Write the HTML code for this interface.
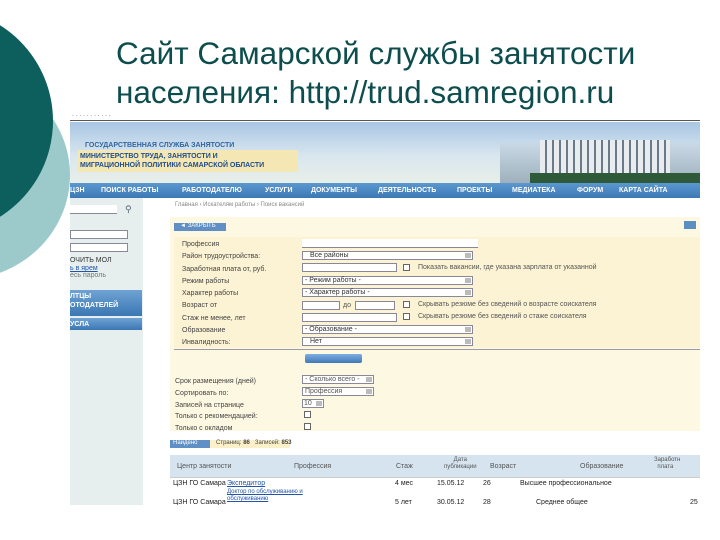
<!DOCTYPE html>
<html><head><meta charset="utf-8"><style>
*{margin:0;padding:0;box-sizing:border-box}
body{width:720px;height:540px;background:#fff;position:relative;overflow:hidden;font-family:"Liberation Sans","DejaVu Sans",sans-serif}
.a{position:absolute}
.t{position:absolute;font-size:7px;color:#555;white-space:nowrap;line-height:9px}
.n{position:absolute;top:73px;font-size:7px;color:#fff;font-weight:bold;white-space:nowrap;line-height:9px}
.in{position:absolute;height:9px;background:#fff;border:1px solid #889}
.sel::after{content:"";position:absolute;right:1px;top:1px;width:6px;height:5px;background:#bbb}
.cb{position:absolute;width:7px;height:7px;border:1px solid #666;background:#fff}
</style></head><body>
<div class="a" style="left:-150px;top:70px;width:220px;height:210px;border-radius:50%;background:#9ccaca"></div>
<div class="a" style="left:-173px;top:8px;width:226px;height:226px;border-radius:50%;background:#0c5f5c"></div>
<div class="a" style="left:116px;top:34px;font-size:31.5px;line-height:39px;color:#0e4d4d;white-space:nowrap">Сайт Самарской службы занятости<br>населения: http://trud.samregion.ru</div>

<div class="a" style="left:70px;top:113px;width:630px;height:392px;background:#fff;overflow:hidden">
 <div class="a" style="left:0;top:0;width:630px;height:8px;background:#fff;border-bottom:1px solid #555"></div>
 <div class="t" style="left:2px;top:-1px;font-size:6px;color:#444">· · · · · · · · · · ·</div>
 <div class="a" style="left:0;top:9px;width:630px;height:61px;background:linear-gradient(#a9c6e4,#d8e6ee 55%,#e8efe8)"></div>
 <div class="a" style="left:430px;top:30px;width:200px;height:40px;background:linear-gradient(#c9d9e6,#9fb0bd)"></div>
 <div class="a" style="left:470px;top:27px;width:130px;height:43px;background:repeating-linear-gradient(90deg,#e8ecef 0 5px,#6a7a88 5px 7px)"></div>
 <div class="a" style="left:460px;top:60px;width:170px;height:10px;background:#2f5a3a"></div>
 <div class="t" style="left:15px;top:28px;font-size:7px;color:#3266a0;font-weight:bold">ГОСУДАРСТВЕННАЯ СЛУЖБА ЗАНЯТОСТИ</div>
 <div class="a" style="left:8px;top:37px;width:220px;height:22px;background:#f4e7b4"></div>
 <div class="t" style="left:10px;top:39px;font-size:7px;color:#1f4d8a;font-weight:bold;line-height:9px">МИНИСТЕРСТВО ТРУДА, ЗАНЯТОСТИ И<br>МИГРАЦИОННОЙ ПОЛИТИКИ САМАРСКОЙ ОБЛАСТИ</div>
 <div class="a" style="left:0;top:70px;width:630px;height:15px;background:linear-gradient(#5b98cf,#3d78b4)"></div>
 <div class="n" style="left:0">ЦЗН</div>
 <div class="n" style="left:31px">ПОИСК РАБОТЫ</div>
 <div class="n" style="left:112px">РАБОТОДАТЕЛЮ</div>
 <div class="n" style="left:195px">УСЛУГИ</div>
 <div class="n" style="left:241px">ДОКУМЕНТЫ</div>
 <div class="n" style="left:308px">ДЕЯТЕЛЬНОСТЬ</div>
 <div class="n" style="left:387px">ПРОЕКТЫ</div>
 <div class="n" style="left:442px">МЕДИАТЕКА</div>
 <div class="n" style="left:507px">ФОРУМ</div>
 <div class="n" style="left:549px">КАРТА САЙТА</div>
 <div class="a" style="left:0;top:85px;width:73px;height:307px;background:#e6efed"></div>
 <div class="in" style="left:0;top:92px;width:47px;border-width:0 0 1px 0"></div>
 <div class="t" style="left:55px;top:92px;font-size:9px;color:#567">⚲</div>
 <div class="in" style="left:0;top:117px;width:58px"></div>
 <div class="in" style="left:0;top:130px;width:58px"></div>
 <div class="t" style="left:0;top:143px;color:#333">ОЧИТЬ МОЛ</div>
 <div class="t" style="left:0;top:151px;color:#2255aa;text-decoration:underline">ь в ярем</div>
 <div class="t" style="left:0;top:158px;color:#777">есь пароль</div>
 <div class="a" style="left:0;top:177px;width:72px;height:26px;background:linear-gradient(#6fa3d3,#3b77b3)"></div>
 <div class="t" style="left:0;top:179px;color:#fff;font-weight:bold">ЛТЦЫ<br>ОТОДАТЕЛЕЙ</div>
 <div class="a" style="left:0;top:205px;width:72px;height:12px;background:linear-gradient(#6fa3d3,#3b77b3)"></div>
 <div class="t" style="left:0;top:207px;color:#fff;font-weight:bold">УСЛА</div>
 <div class="a" style="left:80px;top:85px;width:550px;height:307px;background:#fff"></div>
 <div class="a" style="left:100px;top:104px;width:530px;height:214px;background:#fdf8e2"></div>
 <div class="t" style="left:105px;top:88px;color:#888;font-size:6px">Главная › Искателям работы › Поиск вакансий</div>
 <div class="a" style="left:104px;top:110px;width:52px;height:8px;background:#5f8fc4"></div>
 <div class="t" style="left:110px;top:109px;font-size:6px;color:#fff">◄ ЗАКРЫТЬ</div>
 <div class="a" style="left:614px;top:108px;width:12px;height:8px;background:#5c8ec0"></div>
 <div class="a" style="left:104px;top:124px;width:526px;height:111px;background:#fcf2d4"></div>
 <div class="t" style="left:112px;top:126px;line-height:12.3px;color:#444">Профессия<br>Район трудоустройства:<br>Заработная плата от, руб.<br>Режим работы<br>Характер работы<br>Возраст от<br>Стаж не менее, лет<br>Образование<br>Инвалидность:</div>
 <div class="in" style="left:232px;top:126px;width:176px;border-width:0 0 1px 0"></div>
 <div class="in sel" style="left:232px;top:138px;width:171px"></div><div class="t" style="left:240px;top:138px;color:#333">Все районы</div>
 <div class="in" style="left:232px;top:150px;width:95px"></div>
 <div class="in sel" style="left:232px;top:163px;width:171px"></div><div class="t" style="left:235px;top:163px;color:#333">- Режим работы -</div>
 <div class="in sel" style="left:232px;top:175px;width:171px"></div><div class="t" style="left:235px;top:175px;color:#333">- Характер работы -</div>
 <div class="in" style="left:232px;top:188px;width:38px"></div><div class="t" style="left:273px;top:188px">до</div><div class="in" style="left:285px;top:188px;width:40px"></div>
 <div class="in" style="left:232px;top:200px;width:95px"></div>
 <div class="in sel" style="left:232px;top:212px;width:171px"></div><div class="t" style="left:235px;top:212px;color:#333">- Образование -</div>
 <div class="in sel" style="left:232px;top:224px;width:171px"></div><div class="t" style="left:240px;top:224px;color:#333">Нет</div>
 <div class="cb" style="left:333px;top:151px"></div>
 <div class="t" style="left:348px;top:150px">Показать вакансии, где указана зарплата от указанной</div>
 <div class="cb" style="left:333px;top:188px"></div>
 <div class="t" style="left:348px;top:187px">Скрывать резюме без сведений о возрасте соискателя</div>
 <div class="cb" style="left:333px;top:200px"></div>
 <div class="t" style="left:348px;top:199px">Скрывать резюме без сведений о стаже соискателя</div>
 <div class="a" style="left:104px;top:236px;width:526px;height:1px;background:#99a"></div>
 <div class="a" style="left:235px;top:241px;width:57px;height:9px;background:linear-gradient(#7faee0,#3d78b8);border-radius:2px"></div>
 <div class="t" style="left:105px;top:263px;line-height:11.8px;color:#444">Срок размещения (дней)<br>Сортировать по:<br>Записей на странице<br>Только с рекомендацией:<br>Только с окладом</div>
 <div class="in sel" style="left:232px;top:262px;width:72px"></div><div class="t" style="left:235px;top:262px">- Сколько всего -</div>
 <div class="in sel" style="left:232px;top:274px;width:72px"></div><div class="t" style="left:235px;top:274px">Профессия</div>
 <div class="in sel" style="left:232px;top:286px;width:22px"></div><div class="t" style="left:234px;top:286px">10</div>
 <div class="cb" style="left:234px;top:298px"></div>
 <div class="cb" style="left:234px;top:310px"></div>
 <div class="a" style="left:100px;top:327px;width:40px;height:8px;background:#5f8fc4"></div>
 <div class="a" style="left:140px;top:327px;width:80px;height:8px;background:#fbf0c8"></div>
 <div class="t" style="left:103px;top:326px;font-size:6px;color:#fff">Найдено</div>
 <div class="t" style="left:146px;top:326px;font-size:6px;color:#444">Страниц: <b>86</b> &nbsp; Записей: <b>853</b></div>
 <div class="a" style="left:100px;top:342px;width:530px;height:22px;background:#d5e4ef"></div>
 <div class="a" style="left:100px;top:364px;width:530px;height:28px;background:#fff;border-top:1px solid #ccc"></div>
 <div class="t" style="left:107px;top:349px">Центр занятости</div>
 <div class="t" style="left:224px;top:349px">Профессия</div>
 <div class="t" style="left:326px;top:349px">Стаж</div>
 <div class="t" style="left:374px;top:344px;font-size:6px;line-height:7px;text-align:center">Дата<br>публикации</div>
 <div class="t" style="left:420px;top:349px">Возраст</div>
 <div class="t" style="left:510px;top:349px">Образование</div>
 <div class="t" style="left:584px;top:344px;font-size:6px;line-height:7px">Заработн<br>&nbsp;&nbsp;плата</div>
 <div class="t" style="left:103px;top:366px;color:#222">ЦЗН ГО Самара</div>
 <div class="t" style="left:157px;top:366px;color:#2255aa;text-decoration:underline">Экспедитор</div>
 <div class="t" style="left:325px;top:366px;color:#222">4 мес</div>
 <div class="t" style="left:367px;top:366px;color:#222">15.05.12</div>
 <div class="t" style="left:413px;top:366px;color:#222">26</div>
 <div class="t" style="left:450px;top:366px;color:#222">Высшее профессиональное</div>
 <div class="t" style="left:157px;top:376px;font-size:6px;line-height:7px;color:#2255aa;text-decoration:underline">Доктор по обслуживанию и<br>обслуживанию</div>
 <div class="t" style="left:103px;top:385px;color:#222">ЦЗН ГО Самара</div>
 <div class="t" style="left:325px;top:385px;color:#222">5 лет</div>
 <div class="t" style="left:367px;top:385px;color:#222">30.05.12</div>
 <div class="t" style="left:413px;top:385px;color:#222">28</div>
 <div class="t" style="left:466px;top:385px;color:#222">Среднее общее</div>
 <div class="t" style="left:620px;top:385px;color:#222">25</div>
</div>
</body></html>
